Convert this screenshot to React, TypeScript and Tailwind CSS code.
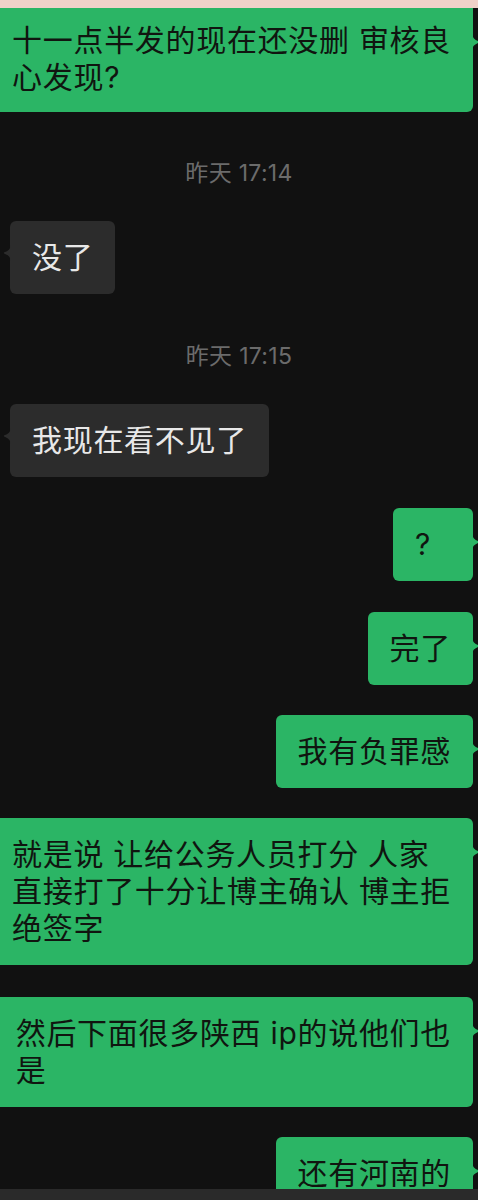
import React from 'react';

type Msg =
  | { kind: 'time'; text: string; mt: string }
  | { kind: 'in' | 'out'; lines: string[]; mt: string; first?: boolean };

const messages: Msg[] = [
  { kind: 'out', lines: ['十一点半发的现在还没删 审核良', '心发现?'], mt: 'mt-0', first: true },
  { kind: 'time', text: '昨天 17:14', mt: 'mt-[47px]' },
  { kind: 'in', lines: ['没了'], mt: 'mt-[34px]' },
  { kind: 'time', text: '昨天 17:15', mt: 'mt-[48px]' },
  { kind: 'in', lines: ['我现在看不见了'], mt: 'mt-[34px]' },
  { kind: 'out', lines: ['?'], mt: 'mt-[31px]' },
  { kind: 'out', lines: ['完了'], mt: 'mt-[31px]' },
  { kind: 'out', lines: ['我有负罪感'], mt: 'mt-[30px]' },
  { kind: 'out', lines: ['就是说 让给公务人员打分 人家', '直接打了十分让博主确认 博主拒', '绝签字'], mt: 'mt-[30px]' },
  { kind: 'out', lines: ['然后下面很多陕西 ip的说他们也', '是'], mt: 'mt-[32px]' },
  { kind: 'out', lines: ['还有河南的'], mt: 'mt-[30px]' },
];

const font = { fontFamily: 'Inter, "Noto Sans CJK SC", sans-serif' };

const TailRight = () => (
  <svg className="absolute right-[-7px] top-[26px]" width="8" height="16" viewBox="0 0 8 16">
    <path d="M0 0 C0.5 4 3 6 6.5 7.3 C7.5 7.7 7.5 8.3 6.5 8.7 C3 10 0.5 12 0 16 Z" fill="#2bb565" />
  </svg>
);

const TailLeft = () => (
  <svg className="absolute left-[-7px] top-[24px]" width="8" height="16" viewBox="0 0 8 16">
    <path d="M8 0 C7.5 4 5 6 1.5 7.3 C0.5 7.7 0.5 8.3 1.5 8.7 C5 10 7.5 12 8 16 Z" fill="#2c2c2c" />
  </svg>
);

export default function App() {
  return (
    <div className="w-[478px] h-[1200px] flex flex-col bg-[#111111] overflow-hidden" style={font}>
      <div className="h-[8px] shrink-0 bg-[#f0d2c9]" />
      <div className="flex-1 flex flex-col overflow-hidden">
        {messages.map((m, i) => {
          if (m.kind === 'time') {
            return (
              <div key={i} className={`${m.mt} shrink-0 text-center text-[23px] leading-[28px] tracking-[0.3px] text-[#6b6b6b]`}>
                {m.text}
              </div>
            );
          }
          if (m.kind === 'in') {
            return (
              <div key={i} className={`${m.mt} shrink-0 flex justify-start pl-[10px]`}>
                <div className="relative shrink-0 rounded-[6px] bg-[#2c2c2c] px-[22px] py-[18px] text-[30px] leading-[37px] tracking-[0.7px] text-[#e8e8e8] whitespace-nowrap">
                  <TailLeft />
                  {m.lines.map((l, j) => (
                    <div key={j}>{l}</div>
                  ))}
                </div>
              </div>
            );
          }
          return (
            <div key={i} className={`${m.mt} shrink-0 flex justify-end pr-[5px]`}>
              <div
                className={`relative shrink-0 min-w-[80px] rounded-[6px] bg-[#2bb565] px-[22px] text-[30px] leading-[37px] tracking-[0.7px] text-[#101510] whitespace-nowrap ${
                  m.first ? 'pt-[14px] pb-[16px] rounded-t-none' : 'py-[18px]'
                }`}
              >
                <TailRight />
                {m.lines.map((l, j) => (
                  <div key={j}>{l}</div>
                ))}
              </div>
            </div>
          );
        })}
      </div>
      <div className="h-[11px] shrink-0 bg-[#2a2a2a]" />
    </div>
  );
}
